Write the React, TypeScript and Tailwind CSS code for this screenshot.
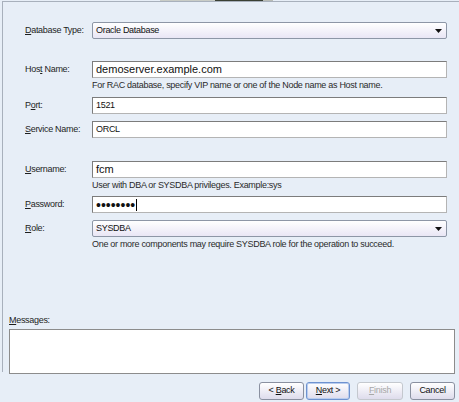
import React from "react"

const font = { fontFamily: '"Liberation Sans", Arial, sans-serif' }

function Label({ text, u }: { text: string; u: number }) {
  return (
    <div className="w-[67px] shrink-0 text-[9px] tracking-[-0.3px] text-[#1e1e1e]">
      {text.slice(0, u)}
      <span className="underline">{text[u]}</span>
      {text.slice(u + 1)}
    </div>
  )
}

function Select({ value }: { value: string }) {
  return (
    <div className="flex h-[17px] w-[355px] items-center justify-between rounded-[2px] border border-[#8d96a6] bg-gradient-to-b from-white to-[#e9e6f5] pl-[3px] pr-[4px] text-[9px] tracking-[-0.3px] text-[#111]">
      <span>{value}</span>
      <svg width="7" height="4" viewBox="0 0 7 4">
        <path d="M0 0h7L3.5 4z" fill="#111" />
      </svg>
    </div>
  )
}

function Input({ children, big }: { children: React.ReactNode; big?: boolean }) {
  return (
    <div
      className={
        "flex h-[17px] w-[355px] items-center border border-[#b4b4b4] border-l-[#7c7c7c] border-t-[#7c7c7c] bg-white pl-[3px] text-[#111] " +
        (big ? "text-[11px]" : "text-[9px] tracking-[-0.3px]")
      }
    >
      {children}
    </div>
  )
}

function Hint({ children }: { children: React.ReactNode }) {
  return <div className="ml-[67px] h-[14px] text-[9px] leading-[14px] tracking-[-0.3px] text-[#2a2a2a]">{children}</div>
}

function Btn({ label, u, cls }: { label: string; u: number; cls?: string }) {
  return (
    <button
      className={
        "flex h-[18px] items-center justify-center rounded-[3px] border bg-gradient-to-b from-white to-[#dedcec] text-[9px] tracking-[-0.3px] " +
        (cls ?? "border-[#8a90a0] text-[#111]")
      }
    >
      <span className="whitespace-pre">
        {u < 0 ? (
          label
        ) : (
          <>
            {label.slice(0, u)}
            <span className="underline">{label[u]}</span>
            {label.slice(u + 1)}
          </>
        )}
      </span>
    </button>
  )
}

export default function App() {
  return (
    <div className="relative h-[402px] w-[459px] overflow-hidden bg-[#e7eef7]" style={font}>
      {/* strip of the window above */}
      <div className="flex h-px">
        <div className="w-[160px]" />
        <div className="w-[55px] bg-[#c9ccc6]" />
        <div className="w-[48px] bg-[#3a4034]" />
        <div className="w-[10px] bg-[#b9bcb6]" />
      </div>

      {/* form panel */}
      <div className="ml-[2px] h-[371px] border-l border-t border-[#a8b0bc] pl-[22px]">
        <div className="mt-[20px] flex items-center">
          <Label text="Database Type:" u={0} />
          <Select value="Oracle Database" />
        </div>

        <div className="mt-[22px] flex items-center">
          <Label text="Host Name:" u={3} />
          <Input big>demoserver.example.com</Input>
        </div>
        <Hint>For RAC database, specify VIP name or one of the Node name as Host name.</Hint>

        <div className="mt-[5px] flex items-center">
          <Label text="Port:" u={1} />
          <Input>1521</Input>
        </div>

        <div className="mt-[7px] flex items-center">
          <Label text="Service Name:" u={0} />
          <Input>ORCL</Input>
        </div>

        <div className="mt-[23px] flex items-center">
          <Label text="Username:" u={0} />
          <Input big>fcm</Input>
        </div>
        <Hint>User with DBA or SYSDBA privileges. Example:sys</Hint>

        <div className="mt-[4px] flex items-center">
          <Label text="Password:" u={0} />
          <Input>
            <span className="text-[14px] leading-none tracking-normal">••••••••</span>
            <span className="ml-px h-[12px] w-px bg-black" />
          </Input>
        </div>

        <div className="mt-[7px] flex items-center">
          <Label text="Role:" u={0} />
          <Select value="SYSDBA" />
        </div>
        <Hint>One or more components may require SYSDBA role for the operation to succeed.</Hint>

        <div className="-ml-[16px] mt-[62px] h-[14px] text-[9px] leading-[14px] tracking-[-0.3px] text-[#1e1e1e]">
          <span className="underline">M</span>essages:
        </div>
        <div className="-ml-[16px] mt-[2px] h-[45px] w-[446px] border border-[#8c8c8c] bg-white" />
      </div>

      {/* buttons */}
      <div className="mt-[10px] flex justify-end pr-[4px]">
        <Btn label="< Back" u={2} cls="w-[45px] border-[#8a90a0] text-[#111]" />
        <Btn label="Next >" u={0} cls="ml-[2px] w-[44px] border-[#6e92d0] text-[#111] shadow-[inset_0_0_0_1px_#b9cdee]" />
        <Btn label="Finish" u={0} cls="ml-[7px] w-[46px] border-[#c4c8ce] text-[#a8a8a8]" />
        <Btn label="Cancel" u={-1} cls="ml-[7px] w-[45px] border-[#8a90a0] text-[#111]" />
      </div>
    </div>
  )
}
